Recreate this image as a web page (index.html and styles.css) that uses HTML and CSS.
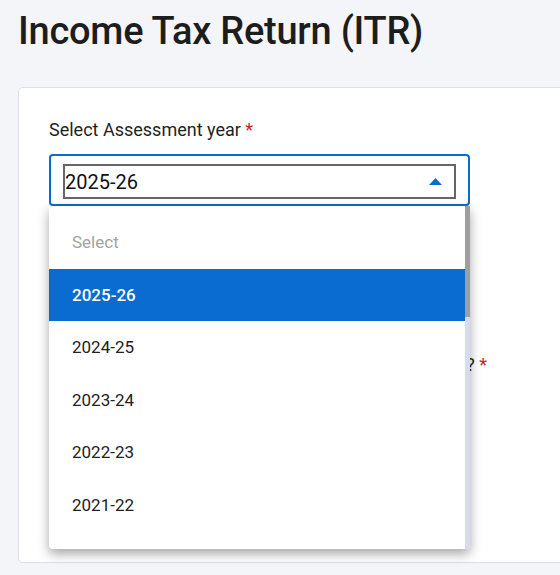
FILE: index.html
```html
<!DOCTYPE html>
<html lang="en">
<head>
<meta charset="utf-8">
<title>Income Tax Return (ITR)</title>
<link rel="stylesheet" href="styles.css">
</head>
<body>
<div class="page">
  <h1 class="title">Income Tax Return (ITR)</h1>
  <div class="card">
    <div class="field">
      <label class="label">Select Assessment year <span class="req">*</span></label>
      <div class="select-wrap">
        <div class="select">
          <div class="select-inner">
            <span class="select-value">2025-26</span>
            <svg class="caret" width="13" height="7" viewBox="0 0 13 7"><path d="M0 7 L6.5 0 L13 7 Z" fill="#0a6bd0"/></svg>
          </div>
        </div>
        <div class="dropdown">
          <ul class="options">
            <li class="option placeholder">Select</li>
            <li class="option active">2025-26</li>
            <li class="option">2024-25</li>
            <li class="option">2023-24</li>
            <li class="option">2022-23</li>
            <li class="option">2021-22</li>
          </ul>
          <div class="scrollbar"><div class="thumb"></div></div>
        </div>
      </div>
    </div>
    <div class="field second">
      <label class="label label-right">Have you already filed your return for this year? <span class="req">*</span></label>
    </div>
  </div>
</div>
</body>
</html>
```

FILE: styles.css
```css
html, body {
  margin: 0;
  padding: 0;
}
body {
  background: #f4f5f9;
  font-family: Roboto, "Liberation Sans", sans-serif;
  color: #222;
  overflow: hidden;
  width: 560px;
  height: 575px;
}
.page {
  padding: 9px 0 0 18px;
}
.title {
  margin: 0;
  font-size: 38px;
  font-weight: 500;
  line-height: 45px;
  color: #1d1d1d;
  letter-spacing: -0.25px;
}
.card {
  margin-top: 33px;
  width: 600px;
  height: 476px;
  box-sizing: border-box;
  background: #fff;
  border: 1px solid #dcdfea;
  border-radius: 5px;
  padding: 30px 0 0 30px;
}
.field {
  display: flex;
  flex-direction: column;
}
.label {
  font-size: 18px;
  line-height: 24px;
  color: #1f1f1f;
}
.req {
  color: #d0212d;
}
.select-wrap {
  position: relative;
  margin-top: 12px;
  width: 421px;
}
.select {
  box-sizing: border-box;
  height: 52px;
  border: 2px solid #0a6bd0;
  border-radius: 4px;
  padding: 8px 12px 7px 12px;
  background: #fff;
}
.select-inner {
  box-sizing: border-box;
  height: 35px;
  border: 2px solid #666;
  display: flex;
  align-items: center;
  justify-content: space-between;
  padding: 0 12px 0 0;
}
.select-value {
  font-size: 20px;
  color: #111;
}
.caret {
  display: block;
  margin-top: -1px;
}
.dropdown {
  position: absolute;
  left: 0;
  top: 52px;
  width: 421px;
  height: 343px;
  background: #fff;
  border-radius: 0 0 4px 4px;
  box-shadow: 0 5px 12px rgba(0, 0, 0, 0.35);
  display: flex;
  overflow: hidden;
  z-index: 2;
}
.options {
  list-style: none;
  margin: 0;
  padding: 10px 0 0 0;
  flex: 1;
}
.option {
  height: 52.6px;
  line-height: 52.6px;
  padding-left: 23px;
  font-size: 17px;
  color: #222;
}
.option.placeholder {
  color: #a3a3a3;
}
.option.active {
  background: #0a6bd0;
  color: #fff;
  font-weight: 500;
}
.scrollbar {
  width: 5px;
  background: #d7dbea;
}
.thumb {
  height: 111px;
  background: #9e9e9e;
}
.second {
  margin-top: 147px;
}
.label-right {
  width: 438px;
  text-align: right;
  white-space: nowrap;
}
```
